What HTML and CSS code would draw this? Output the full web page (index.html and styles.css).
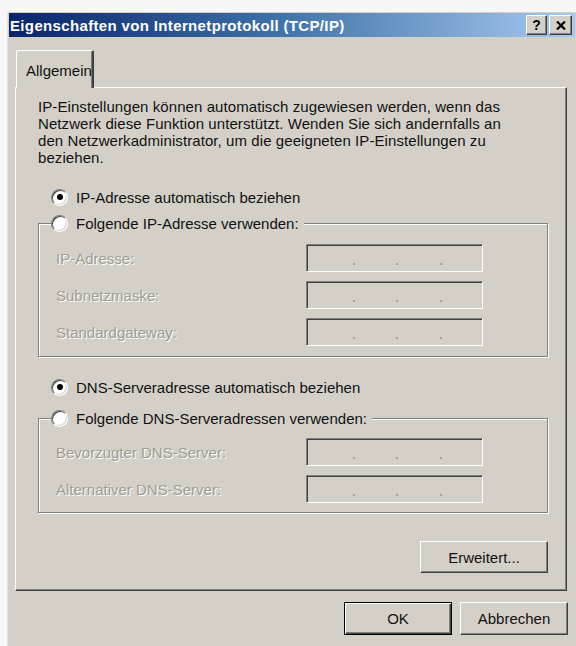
FILE: index.html
```html
<!DOCTYPE html>
<html lang="de">
<head>
<meta charset="utf-8">
<title>Eigenschaften von Internetprotokoll (TCP/IP)</title>
<link rel="stylesheet" href="styles.css">
</head>
<body>
<div class="window">
  <div class="titlebar">
    <span class="title">Eigenschaften von Internetprotokoll (TCP/IP)</span>
    <div class="caption-buttons">
      <button class="cap help">?</button>
      <button class="cap close" aria-label="Schließen">
        <svg width="10" height="9" viewBox="0 0 10 9"><path d="M1 0.5 L9 8.5 M9 0.5 L1 8.5" stroke="#000" stroke-width="2.2" fill="none"/></svg>
      </button>
    </div>
  </div>

  <div class="client">
    <div class="tabs"><div class="tab active">Allgemein</div></div>

    <div class="panel">
      <p class="intro">IP-Einstellungen können automatisch zugewiesen werden, wenn das<br>
      Netzwerk diese Funktion unterstützt. Wenden Sie sich andernfalls an<br>
      den Netzwerkadministrator, um die geeigneten IP-Einstellungen zu<br>
      beziehen.</p>

      <div class="radio checked"><span class="dot"></span>IP-Adresse automatisch beziehen</div>

      <fieldset class="group">
        <legend><span class="radio"><span class="dot"></span>Folgende IP-Adresse verwenden:</span></legend>
        <div class="row"><span class="lbl">IP-Adresse:</span><span class="ipfield"><i></i><i></i><i></i></span></div>
        <div class="row"><span class="lbl">Subnetzmaske:</span><span class="ipfield"><i></i><i></i><i></i></span></div>
        <div class="row"><span class="lbl">Standardgateway:</span><span class="ipfield"><i></i><i></i><i></i></span></div>
      </fieldset>

      <div class="radio checked second"><span class="dot"></span>DNS-Serveradresse automatisch beziehen</div>

      <fieldset class="group dns">
        <legend><span class="radio"><span class="dot"></span>Folgende DNS-Serveradressen verwenden:</span></legend>
        <div class="row"><span class="lbl">Bevorzugter DNS-Server:</span><span class="ipfield"><i></i><i></i><i></i></span></div>
        <div class="row"><span class="lbl">Alternativer DNS-Server:</span><span class="ipfield"><i></i><i></i><i></i></span></div>
      </fieldset>

      <div class="panel-actions"><button class="btn">Erweitert...</button></div>
    </div>

    <div class="dialog-actions">
      <button class="btn default">OK</button>
      <button class="btn">Abbrechen</button>
    </div>
  </div>
</div>
</body>
</html>
```
FILE: styles.css
```css
* { box-sizing: border-box; }

html, body {
  margin: 0;
  padding: 0;
  background: #f7f7f7;
  font-family: "Liberation Sans", Arial, sans-serif;
  font-size: 15px;
  color: #111;
}

/* window frame */
.window {
  margin: 12px 0 0 7px;
  width: 569px;
  height: 634px;
  background: #d4d0c8;
  padding: 1px 1px 0 1px;
  border-left: 1px solid #e6e3de;
}

.titlebar {
  height: 24px;
  display: flex;
  align-items: center;
  justify-content: space-between;
  background: linear-gradient(to right, #0a246a 0%, #3a6ea5 45%, #a6caf0 100%);
  padding: 0 3px 0 1px;
}

.title {
  color: #fff;
  font-weight: bold;
  font-size: 15px;
  letter-spacing: 0.35px;
  white-space: nowrap;
}

.caption-buttons {
  display: flex;
  gap: 2px;
}

.cap {
  width: 21px;
  height: 20px;
  padding: 0;
  margin: 0;
  background: #d4d0c8;
  border: 1px solid;
  border-color: #fff #404040 #404040 #fff;
  box-shadow: inset -1px -1px #808080;
  display: flex;
  align-items: center;
  justify-content: center;
  font-family: "Liberation Sans", Arial, sans-serif;
  font-weight: bold;
  font-size: 14px;
  color: #000;
  line-height: 1;
}

.cap.close { width: 23px; }

/* dialog client area */
.client {
  padding: 13px 7px 0 6px;
}

.tabs {
  display: flex;
  height: 37px;
  align-items: flex-end;
}

.tab {
  height: 38px;
  margin-left: 1px;
  margin-bottom: -1px;
  width: 78px;
  padding-top: 11px;
  padding-left: 9px;
  background: #d4d0c8;
  border-top: 1px solid #fff;
  border-left: 1px solid #fff;
  border-right: 2px solid #404040;
  border-top-left-radius: 2px;
  border-top-right-radius: 2px;
  box-shadow: inset -1px 0 #808080;
  position: relative;
  z-index: 1;
}

.panel {
  width: 552px;
  height: 504px;
  border: 1px solid;
  border-color: #fff #404040 #404040 #fff;
  box-shadow: inset -1px -1px #808080;
  padding: 10px 18px 0 22px;
  display: flex;
  flex-direction: column;
}

.intro {
  margin: 0;
  line-height: 17px;
  letter-spacing: 0.08px;
  white-space: nowrap;
}

/* radio buttons */
.radio {
  display: flex;
  align-items: center;
  height: 20px;
  padding-left: 13px;
  white-space: nowrap;
}

.panel > .radio { margin-top: 21px; }
.panel > .radio.second { margin-top: 20px; }

.dot {
  width: 17px;
  height: 17px;
  flex: none;
  border-radius: 50%;
  background: #fff;
  border: 1px solid;
  border-color: #808080 #fff #fff #808080;
  box-shadow: inset 1px 1px #404040, inset -1px -1px #d4d0c8;
  margin-right: 8px;
  display: flex;
  align-items: center;
  justify-content: center;
}

.checked .dot::after {
  content: "";
  width: 6px;
  height: 6px;
  border-radius: 50%;
  background: #000;
}

/* etched group boxes */
.group {
  margin: 6px 0 0 0;
  border: 1px solid #808080;
  box-shadow: inset 1px 1px #fff, 1px 1px #fff;
  padding: 11px 0 10px 17px;
  min-width: 0;
}

.group.dns {
  margin-top: 11px;
  padding-top: 10px;
  padding-bottom: 9px;
}

.group legend {
  padding: 0 5px 0 0;
  margin-left: -5px;
  background: #d4d0c8;
  height: 20px;
}

.group legend .radio {
  padding-left: 0;
  padding-right: 0;
}

.row {
  display: grid;
  grid-template-columns: 250px 177px;
  align-items: center;
  height: 28px;
}

.row + .row { margin-top: 9px; }

.lbl {
  color: #a09c94;
  text-shadow: 1px 1px #fff;
  white-space: nowrap;
}

.ipfield {
  height: 28px;
  position: relative;
  background: #d4d0c8;
  border: 1px solid;
  border-color: #808080 #fff #fff #808080;
  box-shadow: inset 1px 1px #404040, inset -1px -1px #d4d0c8;
  display: block;
}

/* separator dots between the octets */
.ipfield i {
  position: absolute;
  top: 18px;
  width: 2px;
  height: 2px;
  background: #a8a49c;
}
.ipfield i:nth-child(1) { left: 46px; }
.ipfield i:nth-child(2) { left: 89px; }
.ipfield i:nth-child(3) { left: 133px; }

/* push buttons */
.btn {
  font-family: "Liberation Sans", Arial, sans-serif;
  font-size: 15px;
  color: #111;
  background: #d4d0c8;
  border: 1px solid;
  border-color: #fff #404040 #404040 #fff;
  box-shadow: inset -1px -1px #808080;
  width: 108px;
  height: 33px;
  padding: 0;
  margin: 0;
}

.panel-actions {
  display: flex;
  justify-content: flex-end;
  margin-top: 28px;
}

.panel-actions .btn { width: 128px; height: 32px; }

.dialog-actions {
  display: flex;
  justify-content: flex-end;
  gap: 8px;
  margin-top: 11px;
  padding-right: 0;
}

.btn.default {
  border: 1px solid #000;
  box-shadow: inset 1px 1px #fff, inset -1px -1px #404040, inset -2px -2px #808080;
}
```
